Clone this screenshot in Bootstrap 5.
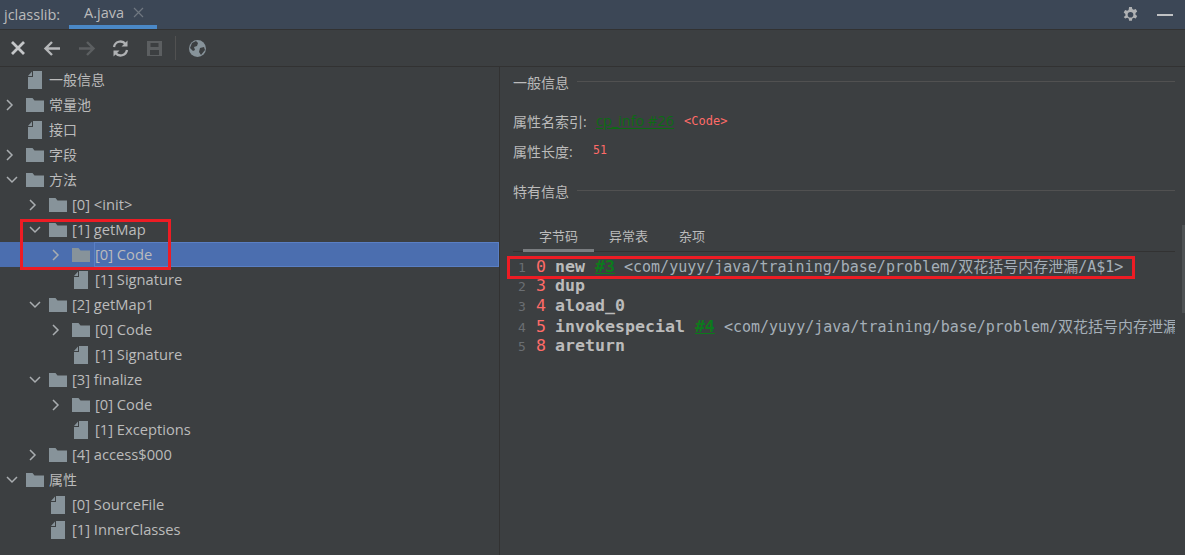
<!DOCTYPE html>
<html lang="zh"><head><meta charset="utf-8"><title>jclasslib</title>
<link href="https://cdn.jsdelivr.net/npm/bootstrap@5.3.0/dist/css/bootstrap.min.css" rel="stylesheet">
<style>
html,body{height:555px;overflow:hidden}
body{background:#3c3f41;color:#bbb;font-family:"Open Sans","Noto Sans CJK SC",sans-serif;font-size:14px;position:relative}
.ide-head{height:30px;background:#3c4756;border-bottom:1px solid #323232}
.ide-brand{padding-left:4px;width:69px;font-size:14.5px;color:#bbb}
.ide-tab{width:88px;height:29px;border-bottom:4px solid #4a88c7;padding-left:15px;font-size:14.5px;color:#bbb}
.ide-x{margin-left:9px}
.ide-gear{margin-right:18px}
.ide-min{margin-right:12px}
.ide-tools{height:37px;border-bottom:1px solid #323232;padding-left:8px}
.tool{width:21px;height:21px;margin-right:13px;display:block}
.tool-sep{width:1px;height:24px;background:#515151;margin-right:11px;margin-left:-3px}
.ide-main{height:488px}
.tree{width:500px;border-right:1px solid #323232;flex:none}
.trow{height:25px;line-height:25px;white-space:nowrap}
.lv1{padding-left:23px}.lv2{padding-left:46px}
.chev{width:26px;flex:none;padding-left:5px;display:flex}
.ico{width:23px;flex:none;display:flex}
.fileic{margin-left:2px}
.lat{font-size:14.7px}
.trow-sel{background:#4b6eaf}
.trow-sel .lbl{border:1px solid #5a7fc4;line-height:23px;padding-right:4px;margin-left:-1px;flex:1}
.pane{flex:1;padding:0 10px 0 13px;min-width:0}
.sect{height:32px;color:#bbb;font-size:14px;gap:8px}
.sect-one{margin-top:-1px}
.sect i{flex:1;height:1px;background:#515151;margin-top:-1px}
.sect-two{margin-top:9px}
.attr{height:30px;font-size:14px;color:#bbb}
.attr-first{margin-top:8px}
.attr-k{width:83px}
.alink{color:#0c6b14;font-size:14.5px;text-decoration:underline;text-underline-offset:2px}
.ared{color:#ff6b68;font-family:"DejaVu Sans Mono",monospace;font-size:12px}
.acode{margin-left:10px}
.alen{margin-left:-3px;font-size:11.5px}
.tabs{height:32px;border-bottom:1px solid #323232;margin-top:13px;font-size:13px;color:#bbb}
.itab{height:32px;line-height:32px;padding:0 15px;margin-right:1px}
.itab-on{border-bottom:3px solid #7a7d80;padding:0 16px;width:71px;margin-left:10px;margin-right:0}
.code{padding-top:4px;font-family:"DejaVu Sans Mono","Noto Sans CJK SC",monospace;font-size:15px;overflow:hidden;color:#a5afb8}
.cl{height:20px;line-height:20px;white-space:pre}
.ln{width:23px;display:inline-block;font-size:13px;color:#6a6e72;padding-left:5px}
.off{width:19px;display:inline-block;color:#ff6b68;font-size:16.6px}
.op{font-weight:700;color:#bbb;font-size:16.6px}
.ref{font-weight:700;color:#0c7a1c;text-decoration:underline;font-size:16.6px}
.zh{font-family:"Noto Sans CJK SC",sans-serif}
.mark-box{position:absolute;border:3px solid #ed1c24;pointer-events:none}
.mb1{left:20px;top:219px;width:151px;height:51px}
.mb2{left:507px;top:256px;width:628px;height:23px}
.sbar{position:absolute;right:0;top:225px;width:3px;height:88px;background:#4e5254}
</style></head><body>
<svg width="0" height="0" class="position-absolute">
<symbol id="fo" viewBox="0 0 18 16"><path d="M0 1h6.500l2 2.500H18V15H0z" fill="#87939a"/></symbol>
<symbol id="fi" viewBox="0 0 14 18"><path d="M5 0h9v18H0V6h5z" fill="#87939a"/><path d="M4 0.500v4.500H0z" fill="#87939a"/></symbol>
<symbol id="cr" viewBox="0 0 10 14"><path d="M2 2l5 5-5 5" fill="none" stroke="#a9adb0" stroke-width="1.500"/></symbol>
<symbol id="cd" viewBox="0 0 14 10"><path d="M2 2l5 5 5-5" fill="none" stroke="#a9adb0" stroke-width="1.500"/></symbol>
</svg>
<div class="ide-head d-flex align-items-center">
 <div class="ide-brand">jclasslib:</div>
 <div class="ide-tab d-flex align-items-center">A.java<svg class="ide-x" width="11" height="11" viewBox="0 0 11 11"><path d="M1 1l9 9M10 1l-9 9" stroke="#6f7780" stroke-width="1.200"/></svg></div>
 <div class="ms-auto d-flex align-items-center">
  <svg width="17" height="17" viewBox="0 0 18 18" class="ide-gear"><path fill="#afb1b3" fill-rule="evenodd" d="M7.500 1h3l.4 2.300 1.500.8 2.200-.8 1.500 2.600-1.800 1.500v1.800l1.800 1.500-1.500 2.600-2.200-.8-1.500.8-.4 2.400h-3l-.4-2.400-1.500-.8-2.200.8L1.800 11.700l1.800-1.500V8.400L1.800 6.900l1.500-2.600 2.200.8 1.500-.8zM9 6.300a3 3 0 1 0 0 6 3 3 0 0 0 0-6z"/></svg>
  <svg width="16" height="4" viewBox="0 0 16 4" class="ide-min"><rect y="1" width="16" height="2" fill="#c0c2c4"/></svg>
 </div>
</div>
<div class="ide-tools d-flex align-items-center">
 <svg class="tool" viewBox="0 0 21 21"><path d="M4 4l12 12M16 4L4 16" stroke="#c4c6c8" stroke-width="2.800"/></svg>
 <svg class="tool" viewBox="0 0 21 21"><path d="M18 10.500H4M10 4l-6.500 6.500L10 17" fill="none" stroke="#b5b7b9" stroke-width="2.400"/></svg>
 <svg class="tool" viewBox="0 0 21 21"><path d="M3 10.500h14M11 4l6.500 6.500L11 17" fill="none" stroke="#5c5f61" stroke-width="2.400"/></svg>
 <svg class="tool" viewBox="0 0 21 21"><path d="M4 9a6.500 6.500 0 0 1 11.500-3M17 12a6.500 6.500 0 0 1-11.500 3" fill="none" stroke="#afb1b3" stroke-width="2.300"/><path d="M17.500 2.500v6h-6zM3.500 18.500v-6h6z" fill="#afb1b3"/></svg>
 <svg class="tool" viewBox="0 0 21 21"><path fill="#5c5f61" fill-rule="evenodd" d="M3 3h15v15H3zM6.500 5v4h8V5zM6 12v5h9v-5z"/></svg>
 <span class="tool-sep"></span>
 <svg class="tool" viewBox="0 0 21 21"><circle cx="10.500" cy="10.500" r="8.500" fill="#87939a"/><path d="M5 5l4-2 2 2-1 3-3 1 1 3-2 1-3-3zM13 10l4-1 1 3-4 5-2-3z" fill="#3c3f41"/></svg>
</div>
<div class="ide-main d-flex">
 <div class="tree">
  <div class="trow d-flex align-items-center"><span class="chev"></span><span class="ico"><svg width="14" height="18" class="fileic"><use href="#fi"/></svg></span><span class="lbl">一般信息</span></div>
  <div class="trow d-flex align-items-center"><span class="chev"><svg width="10" height="14"><use href="#cr"/></svg></span><span class="ico"><svg width="18" height="16"><use href="#fo"/></svg></span><span class="lbl">常量池</span></div>
  <div class="trow d-flex align-items-center"><span class="chev"></span><span class="ico"><svg width="14" height="18" class="fileic"><use href="#fi"/></svg></span><span class="lbl">接口</span></div>
  <div class="trow d-flex align-items-center"><span class="chev"><svg width="10" height="14"><use href="#cr"/></svg></span><span class="ico"><svg width="18" height="16"><use href="#fo"/></svg></span><span class="lbl">字段</span></div>
  <div class="trow d-flex align-items-center"><span class="chev"><svg width="14" height="10"><use href="#cd"/></svg></span><span class="ico"><svg width="18" height="16"><use href="#fo"/></svg></span><span class="lbl">方法</span></div>
  <div class="trow lv1 d-flex align-items-center"><span class="chev"><svg width="10" height="14"><use href="#cr"/></svg></span><span class="ico"><svg width="18" height="16"><use href="#fo"/></svg></span><span class="lbl lat">[0] &lt;init&gt;</span></div>
  <div class="trow lv1 d-flex align-items-center"><span class="chev"><svg width="14" height="10"><use href="#cd"/></svg></span><span class="ico"><svg width="18" height="16"><use href="#fo"/></svg></span><span class="lbl lat">[1] getMap</span></div>
  <div class="trow lv2 trow-sel d-flex align-items-center"><span class="chev"><svg width="10" height="14"><use href="#cr"/></svg></span><span class="ico"><svg width="18" height="16"><use href="#fo"/></svg></span><span class="lbl lat">[0] Code</span></div>
  <div class="trow lv2 d-flex align-items-center"><span class="chev"></span><span class="ico"><svg width="14" height="18" class="fileic"><use href="#fi"/></svg></span><span class="lbl lat">[1] Signature</span></div>
  <div class="trow lv1 d-flex align-items-center"><span class="chev"><svg width="14" height="10"><use href="#cd"/></svg></span><span class="ico"><svg width="18" height="16"><use href="#fo"/></svg></span><span class="lbl lat">[2] getMap1</span></div>
  <div class="trow lv2 d-flex align-items-center"><span class="chev"><svg width="10" height="14"><use href="#cr"/></svg></span><span class="ico"><svg width="18" height="16"><use href="#fo"/></svg></span><span class="lbl lat">[0] Code</span></div>
  <div class="trow lv2 d-flex align-items-center"><span class="chev"></span><span class="ico"><svg width="14" height="18" class="fileic"><use href="#fi"/></svg></span><span class="lbl lat">[1] Signature</span></div>
  <div class="trow lv1 d-flex align-items-center"><span class="chev"><svg width="14" height="10"><use href="#cd"/></svg></span><span class="ico"><svg width="18" height="16"><use href="#fo"/></svg></span><span class="lbl lat">[3] finalize</span></div>
  <div class="trow lv2 d-flex align-items-center"><span class="chev"><svg width="10" height="14"><use href="#cr"/></svg></span><span class="ico"><svg width="18" height="16"><use href="#fo"/></svg></span><span class="lbl lat">[0] Code</span></div>
  <div class="trow lv2 d-flex align-items-center"><span class="chev"></span><span class="ico"><svg width="14" height="18" class="fileic"><use href="#fi"/></svg></span><span class="lbl lat">[1] Exceptions</span></div>
  <div class="trow lv1 d-flex align-items-center"><span class="chev"><svg width="10" height="14"><use href="#cr"/></svg></span><span class="ico"><svg width="18" height="16"><use href="#fo"/></svg></span><span class="lbl lat">[4] access$000</span></div>
  <div class="trow d-flex align-items-center"><span class="chev"><svg width="14" height="10"><use href="#cd"/></svg></span><span class="ico"><svg width="18" height="16"><use href="#fo"/></svg></span><span class="lbl">属性</span></div>
  <div class="trow lv1 d-flex align-items-center"><span class="chev"></span><span class="ico"><svg width="14" height="18" class="fileic"><use href="#fi"/></svg></span><span class="lbl lat">[0] SourceFile</span></div>
  <div class="trow lv1 d-flex align-items-center"><span class="chev"></span><span class="ico"><svg width="14" height="18" class="fileic"><use href="#fi"/></svg></span><span class="lbl lat">[1] InnerClasses</span></div>
 </div>
 <div class="pane">
  <div class="sect sect-one d-flex align-items-center">一般信息<i></i></div>
  <div class="attr attr-first d-flex align-items-center"><span class="attr-k">属性名索引:</span><span class="alink">cp_info #26</span><span class="ared acode">&lt;Code&gt;</span></div>
  <div class="attr d-flex align-items-center"><span class="attr-k">属性长度:</span><span class="ared alen">51</span></div>
  <div class="sect sect-two d-flex align-items-center">特有信息<i></i></div>
  <div class="tabs d-flex">
   <div class="itab itab-on">字节码</div><div class="itab">异常表</div><div class="itab">杂项</div>
  </div>
  <div class="code">
   <div class="cl"><span class="ln">1</span><span class="off">0</span><span class="op">new </span><span class="ref">#3</span> &lt;com/yuyy/java/training/base/problem/<span class="zh">双花括号内存泄漏</span>/A$1&gt;</div>
   <div class="cl"><span class="ln">2</span><span class="off">3</span><span class="op">dup</span></div>
   <div class="cl"><span class="ln">3</span><span class="off">4</span><span class="op">aload_0</span></div>
   <div class="cl"><span class="ln">4</span><span class="off">5</span><span class="op">invokespecial </span><span class="ref">#4</span> &lt;com/yuyy/java/training/base/problem/<span class="zh">双花括号内存泄漏</span></div>
   <div class="cl"><span class="ln">5</span><span class="off">8</span><span class="op">areturn</span></div>
  </div>
 </div>
</div>
<div class="mark-box mb1"></div>
<div class="mark-box mb2"></div>
<div class="sbar"></div>
</body></html>
